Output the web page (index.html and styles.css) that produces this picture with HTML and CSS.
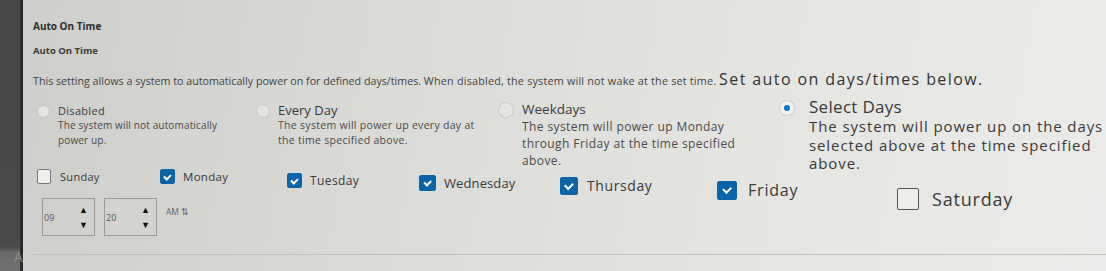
FILE: index.html
```html
<!DOCTYPE html>
<html lang="en">

<head>
    <meta charset="UTF-8">
    <title>Auto On Time</title>
    <link rel="stylesheet" href="styles.css">
</head>

<body>
    <div class="page">
        <aside class="strip">
            <span class="strip-letter">A</span>
        </aside>
        <main class="content">
            <h3 class="title">Auto On Time</h3>
            <h4 class="subtitle">Auto On Time</h4>
            <p class="intro">This setting allows a system to automatically power on for defined days/times. <span class="mid">When disabled, the system will not wake at the set time.</span> <span class="near">Set auto on days/times below.</span></p>

            <div class="options">
                <div class="opt opt-1">
                    <span class="radio"></span>
                    <div>
                        <div class="opt-name">Disabled</div>
                        <div class="opt-desc">The system will not automatically<br>power up.</div>
                    </div>
                </div>
                <div class="opt opt-2">
                    <span class="radio"></span>
                    <div>
                        <div class="opt-name">Every Day</div>
                        <div class="opt-desc">The system will power up every day at<br>the time specified above.</div>
                    </div>
                </div>
                <div class="opt opt-3">
                    <span class="radio"></span>
                    <div>
                        <div class="opt-name">Weekdays</div>
                        <div class="opt-desc">The system will power up Monday<br>through Friday at the time specified<br>above.</div>
                    </div>
                </div>
                <div class="opt opt-4">
                    <span class="radio on"></span>
                    <div>
                        <div class="opt-name">Select Days</div>
                        <div class="opt-desc">The system will power up on the days<br>selected above at the time specified<br>above.</div>
                    </div>
                </div>
            </div>

            <div class="days">
                <label class="day d-1"><span class="box"></span>Sunday</label>
                <label class="day d-2"><span class="box checked"></span>Monday</label>
                <label class="day d-3"><span class="box checked"></span>Tuesday</label>
                <label class="day d-4"><span class="box checked"></span>Wednesday</label>
                <label class="day d-5"><span class="box checked"></span>Thursday</label>
                <label class="day d-6"><span class="box checked"></span>Friday</label>
                <label class="day d-7"><span class="box"></span>Saturday</label>
            </div>

            <div class="time">
                <div class="spin"><span>09</span><span class="arrows">&#9650;<br>&#9660;</span></div>
                <div class="spin"><span>20</span><span class="arrows">&#9650;<br>&#9660;</span></div>
                <div class="ampm">AM &#8645;</div>
            </div>
            <hr class="rule">
        </main>
    </div>
</body>

</html>
```

FILE: styles.css
```css
html, body {
    margin: 0;
    padding: 0;
    height: 271px;
    overflow: hidden;
}

body {
    font-family: 'Open Sans', 'Liberation Sans', sans-serif;
    color: #3a3a3a;
}

.page {
    display: flex;
    height: 271px;
    background: linear-gradient(100deg, #cdcdc9 0%, #dadad6 35%, #e5e5e2 70%, #ebebe9 100%);
}

.strip {
    width: 20px;
    flex-shrink: 0;
    background: linear-gradient(180deg, #474747 0%, #4a4a4a 91%, #686868 93%, #707070 100%);
    border-right: 3px solid #2b2b2b;
    position: relative;
}

.strip-letter {
    position: absolute;
    left: 14px;
    top: 247px;
    font-size: 14px;
    color: #8a8a8a;
}

.content {
    flex: 1;
    padding-left: 10px;
}

.title {
    font-size: 10px;
    font-weight: 700;
    margin: 19px 0 0 0;
    color: #2e2e2e;
}

.subtitle {
    font-size: 9.5px;
    font-weight: 700;
    margin: 11px 0 0 0;
    color: #3a3a3a;
}

.intro {
    font-size: 10.7px;
    line-height: 16px;
    margin: 14px 0 0 0;
    color: #444;
}

.intro .mid {
    font-size: 10.8px;
    letter-spacing: 0.2px;
}

.intro .near {
    font-size: 16px;
    color: #333;
    letter-spacing: 1.4px;
}

.options {
    display: flex;
    height: 66px;
    margin-top: 14px;
}

.opt {
    display: flex;
    align-items: flex-start;
    gap: 8px;
}

.radio {
    display: block;
    border-radius: 50%;
    border: 1px solid #c8c8c8;
    background: #e4e4e2;
    flex-shrink: 0;
}

.radio.on {
    background: #0a74d0;
    border: 4px solid #f2f2f2;
    box-shadow: 0 0 0 1px #d0d0d0;
}

.opt-name {
    color: #3a3a3a;
}

.opt-desc {
    color: #4a4a4a;
}

.opt-1 {
    width: 219px;
    padding-left: 4px;
}

.opt-1 .radio {
    width: 11px;
    height: 11px;
    margin-top: 2px;
}

.opt-1 .opt-name {
    font-size: 11px;
    line-height: 15px;
    letter-spacing: 0.3px;
}

.opt-1 .opt-desc {
    font-size: 10px;
    line-height: 15px;
    letter-spacing: 0.15px;
}

.opt-2 {
    width: 242px;
}

.opt-2 .radio {
    width: 12px;
    height: 12px;
    margin-top: 1px;
}

.opt-2 .opt-name {
    font-size: 13px;
    line-height: 15px;
}

.opt-2 .opt-desc {
    font-size: 10.5px;
    line-height: 15px;
    letter-spacing: 0.3px;
}

.opt-3 {
    width: 282px;
    margin-top: -3px;
}

.opt-3 .radio {
    width: 14px;
    height: 14px;
    margin-top: 2px;
}

.opt-3 .opt-name {
    font-size: 13.5px;
    line-height: 18px;
}

.opt-3 .opt-desc {
    font-size: 12px;
    line-height: 17px;
    letter-spacing: 0.4px;
}

.opt-4 {
    margin-top: -7px;
    gap: 15px;
}

.opt-4 .radio {
    width: 6px;
    height: 6px;
    margin-top: 5px;
}

.opt-4 .opt-name {
    font-size: 17px;
    line-height: 21px;
    letter-spacing: 0.3px;
}

.opt-4 .opt-desc {
    font-size: 15px;
    line-height: 18.5px;
    letter-spacing: 0.9px;
    color: #3a3a3a;
}

.days {
    display: flex;
    align-items: flex-start;
    height: 28px;
}

.day {
    display: flex;
    align-items: center;
    color: #3a3a3a;
}

.box {
    display: inline-block;
    box-sizing: border-box;
    border: 1.5px solid #777;
    border-radius: 2px;
    background: #eeeeec;
    flex-shrink: 0;
    position: relative;
}

.box.checked {
    background: #0b63a8;
    border-color: #0b63a8;
}

.box.checked::after {
    content: "";
    position: absolute;
    left: 32%;
    top: 22%;
    width: 22%;
    height: 38%;
    border-right: 2px solid #fff;
    border-bottom: 2px solid #fff;
    transform: rotate(45deg);
}

.d-1 {
    width: 123px;
    padding-left: 4px;
    font-size: 11px;
    letter-spacing: 0.3px;
    gap: 9px;
}

.d-1 .box {
    width: 14px;
    height: 15px;
}

.d-2 {
    width: 127px;
    font-size: 11.5px;
    letter-spacing: 0.3px;
    gap: 8px;
}

.d-2 .box {
    width: 15px;
    height: 15px;
}

.d-3 {
    width: 132px;
    font-size: 12px;
    letter-spacing: 0.4px;
    gap: 8px;
    margin-top: 3px;
}

.d-3 .box {
    width: 15px;
    height: 15px;
}

.d-4 {
    width: 141px;
    font-size: 13px;
    letter-spacing: 0.1px;
    gap: 8px;
    margin-top: 5px;
}

.d-4 .box {
    width: 17px;
    height: 16px;
}

.d-5 {
    width: 157px;
    font-size: 14px;
    letter-spacing: 0.6px;
    gap: 9px;
    margin-top: 7px;
}

.d-5 .box {
    width: 18px;
    height: 18px;
}

.d-6 {
    width: 180px;
    font-size: 16px;
    letter-spacing: 0.8px;
    gap: 11px;
    margin-top: 10px;
}

.d-6 .box {
    width: 20px;
    height: 19px;
}

.d-7 {
    font-size: 18px;
    letter-spacing: 0.8px;
    gap: 13px;
    margin-top: 18px;
}

.d-7 .box {
    width: 22px;
    height: 22px;
    border-color: #555;
}

.time {
    display: flex;
    align-items: flex-start;
    gap: 9px;
    padding-left: 9px;
    margin-top: 1px;
}

.spin {
    width: 53px;
    height: 38px;
    box-sizing: border-box;
    border: 1px solid #9a9a9a;
    display: flex;
    align-items: center;
    justify-content: space-between;
    padding: 0 6px 0 1px;
    font-size: 9px;
    color: #555;
}

.arrows {
    font-size: 9px;
    line-height: 15px;
    color: #111;
    text-align: center;
}

.ampm {
    font-size: 8.5px;
    color: #666;
    margin-top: 8px;
}

.rule {
    border: 0;
    border-top: 1px solid #bfbfbc;
    margin: 18px 0 0 0;
}
```
